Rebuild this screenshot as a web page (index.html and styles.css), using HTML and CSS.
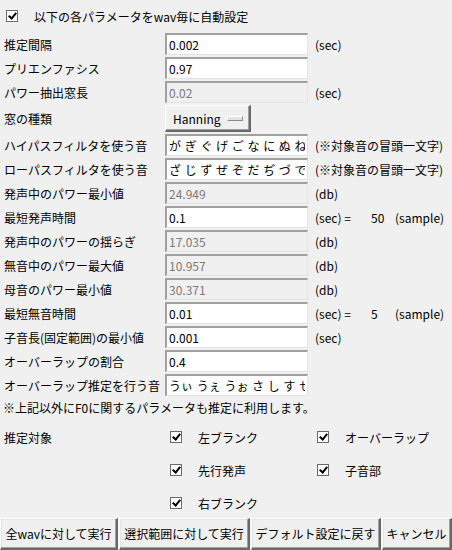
FILE: index.html
```html
<!DOCTYPE html>
<html lang="ja">
<head>
  <meta charset="UTF-8" />
  <title>パラメータ自動設定</title>
  <link rel="stylesheet" href="styles.css">
</head>
<body>
  <div class="dialog">
    <label class="auto-row">
      <span class="check on"></span>
      <span>以下の各パラメータをwav毎に自動設定</span>
    </label>

    <div class="params">
      <div class="label">推定間隔</div>
      <input class="field" type="text" value="0.002" />
      <div class="unit">(sec)</div>

      <div class="label">プリエンファシス</div>
      <input class="field" type="text" value="0.97" />
      <div class="unit"></div>

      <div class="label">パワー抽出窓長</div>
      <input class="field" type="text" value="0.02" disabled />
      <div class="unit">(sec)</div>

      <div class="label">窓の種類</div>
      <div class="combo-cell">
        <button class="combo" type="button">Hanning <span class="combo-bar"></span></button>
      </div>
      <div class="unit"></div>

      <div class="label">ハイパスフィルタを使う音</div>
      <input class="field kana" type="text" value="が ぎ ぐ げ ご な に ぬ ね の" />
      <div class="unit">(※対象音の冒頭一文字)</div>

      <div class="label">ローパスフィルタを使う音</div>
      <input class="field kana" type="text" value="ざ じ ず ぜ ぞ だ ぢ づ で ど" />
      <div class="unit">(※対象音の冒頭一文字)</div>

      <div class="label">発声中のパワー最小値</div>
      <input class="field" type="text" value="24.949" disabled />
      <div class="unit">(db)</div>

      <div class="label">最短発声時間</div>
      <input class="field" type="text" value="0.1" />
      <div class="unit calc"><span class="eq">(sec) =</span><span class="num">50</span><span>(sample)</span></div>

      <div class="label">発声中のパワーの揺らぎ</div>
      <input class="field" type="text" value="17.035" disabled />
      <div class="unit">(db)</div>

      <div class="label">無音中のパワー最大値</div>
      <input class="field" type="text" value="10.957" disabled />
      <div class="unit">(db)</div>

      <div class="label">母音のパワー最小値</div>
      <input class="field" type="text" value="30.371" disabled />
      <div class="unit">(db)</div>

      <div class="label">最短無音時間</div>
      <input class="field" type="text" value="0.01" />
      <div class="unit calc"><span class="eq">(sec) =</span><span class="num">5</span><span>(sample)</span></div>

      <div class="label">子音長(固定範囲)の最小値</div>
      <input class="field" type="text" value="0.001" />
      <div class="unit">(sec)</div>

      <div class="label">オーバーラップの割合</div>
      <input class="field" type="text" value="0.4" />
      <div class="unit"></div>

      <div class="label">オーバーラップ推定を行う音</div>
      <input class="field kana" type="text" value="うぃ うぇ うぉ さ し す せ そ" />
      <div class="unit"></div>
    </div>

    <p class="note">※上記以外にF0に関するパラメータも推定に利用します。</p>

    <div class="targets">
      <div class="targets-title">推定対象</div>
      <label class="opt"><span class="check on"></span>左ブランク</label>
      <label class="opt"><span class="check on"></span>オーバーラップ</label>

      <div></div>
      <label class="opt"><span class="check on"></span>先行発声</label>
      <label class="opt"><span class="check on"></span>子音部</label>

      <div></div>
      <label class="opt"><span class="check on"></span>右ブランク</label>
      <div></div>
    </div>
  </div>

  <div class="buttons">
    <button class="btn" type="button">全wavに対して実行</button>
    <button class="btn" type="button">選択範囲に対して実行</button>
    <button class="btn" type="button">デフォルト設定に戻す</button>
    <button class="btn" type="button">キャンセル</button>
  </div>
</body>
</html>
```

FILE: styles.css
```css
body {
  margin: 0;
  background-color: #f0f0f0;
  font-family: "Noto Sans CJK JP", "Noto Sans", sans-serif;
  font-size: 12px;
  color: #000;
  width: 452px;
  height: 550px;
  overflow: hidden;
}

.dialog {
  padding: 4px 0 0 4px;
}

.auto-row {
  display: flex;
  align-items: center;
  height: 24px;
  padding-left: 2px;
}

.auto-row .check {
  margin-right: 16px;
}

/* チェックボックス */
.check {
  display: inline-block;
  box-sizing: border-box;
  width: 12px;
  height: 12px;
  border: 1px solid #6a6a6a;
  background-color: #fff;
  position: relative;
  flex-shrink: 0;
}

.check.on::after {
  content: "";
  position: absolute;
  left: 3px;
  top: 0px;
  width: 3px;
  height: 6px;
  border: solid #000;
  border-width: 0 2px 2px 0;
  transform: rotate(40deg);
}

.params {
  margin-top: 5px;
  display: grid;
  grid-template-columns: 161px 143px auto;
  grid-auto-rows: auto;
  row-gap: 2px;
}

.label {
  display: flex;
  align-items: center;
  white-space: nowrap;
}

.field {
  box-sizing: border-box;
  width: 143px;
  height: 22px;
  margin: 0;
  padding: 0 2px;
  font-family: inherit;
  font-size: 12px;
  color: #000;
  background-color: #fff;
  border-style: solid;
  border-width: 2px 1px 1px 2px;
  border-color: #a0a0a0 #e3e3e3 #e3e3e3 #a0a0a0;
  outline: none;
}

.field:disabled {
  background-color: #f0f0f0;
  color: #7a7a7a;
}

.field.kana {
  word-spacing: 1px;
}

.unit {
  display: flex;
  align-items: center;
  padding-left: 7px;
  white-space: nowrap;
}

.unit.calc .eq {
  width: 56px;
}

.unit.calc .num {
  width: 24px;
}

.combo-cell {
  height: 27px;
}

.combo {
  box-sizing: border-box;
  width: 86px;
  height: 27px;
  margin: 0;
  padding: 0 6px 0 7px;
  display: flex;
  align-items: center;
  justify-content: space-between;
  font-family: inherit;
  font-size: 12px;
  color: #000;
  background-color: #f0f0f0;
  border-style: solid;
  border-width: 1px 2px 2px 1px;
  border-color: #fff #696969 #696969 #fff;
  box-shadow: inset -1px -1px 0 #a0a0a0;
}

.combo-bar {
  display: inline-block;
  width: 14px;
  height: 3px;
  background-color: #e3e3e3;
  border: 1px solid #8a8a8a;
  border-top-color: #fff;
  border-left-color: #fff;
}

.note {
  margin: 2px 0 0 -1px;
  height: 20px;
  line-height: 20px;
  white-space: nowrap;
}

.targets {
  margin-top: 4px;
  display: grid;
  grid-template-columns: 166px 147px auto;
  grid-auto-rows: 30px;
  row-gap: 3px;
}

.targets-title {
  display: flex;
  align-items: center;
}

.opt {
  display: flex;
  align-items: center;
  gap: 16px;
}

.buttons {
  display: grid;
  grid-template-columns: 118px 131px 130px 70px;
  column-gap: 1px;
  height: 32px;
}

.btn {
  box-sizing: border-box;
  height: 32px;
  margin: 0;
  padding: 0;
  font-family: inherit;
  font-size: 12px;
  color: #000;
  white-space: nowrap;
  background-color: #f0f0f0;
  border-style: solid;
  border-width: 1px 2px 2px 1px;
  border-color: #fff #696969 #696969 #fff;
  box-shadow: inset -1px -1px 0 #a0a0a0, inset 1px 1px 0 #e3e3e3;
}
```
